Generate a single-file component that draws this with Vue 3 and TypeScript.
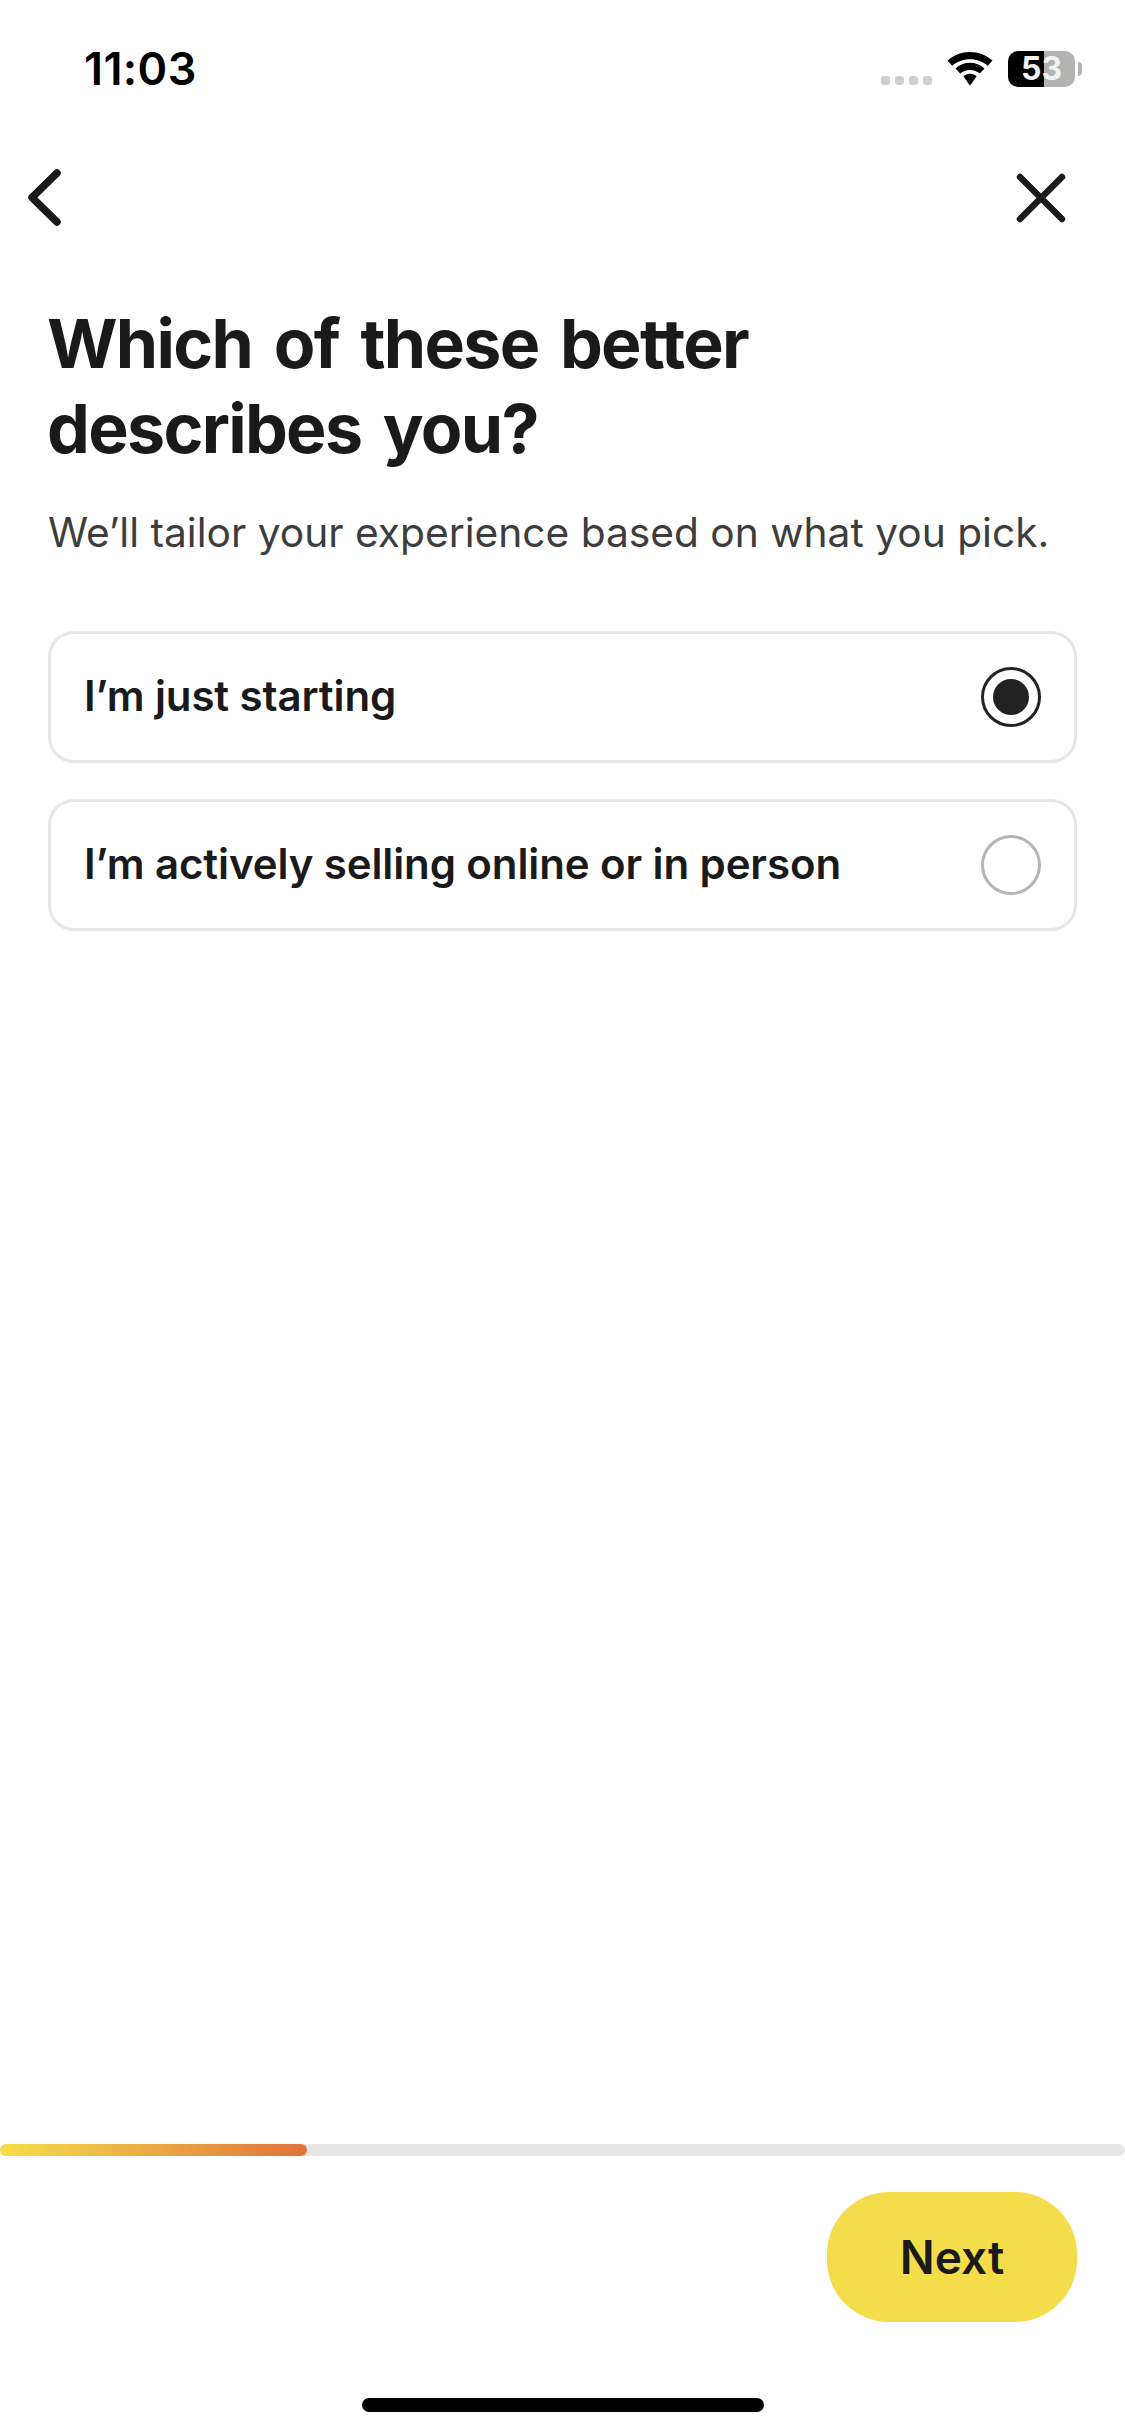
<script setup lang="ts">
interface Option { label: string; selected: boolean }
const options: Option[] = [
  { label: 'I’m just starting', selected: true },
  { label: 'I’m actively selling online or in person', selected: false },
]
const progress = 27.3
</script>

<template>
  <div class="page">
    <header class="status">
      <span class="time">11:03</span>
      <div class="indicators">
        <div class="signal"><i></i><i></i><i></i><i></i></div>
        <svg class="wifi" width="46" height="34" viewBox="0 0 46 34">
          <path d="M23 0C14.500 0 6.500 3.200 .5 8.600L5.200 13.800C10 9.600 16.200 7.200 23 7.200S36 9.600 40.800 13.800L45.500 8.600C39.500 3.200 31.500 0 23 0Z" />
          <path d="M23 10.800C17.700 10.800 12.500 12.800 8.500 16.400L13.200 21.600C15.900 19.300 19.300 18 23 18S30.100 19.300 32.800 21.600L37.500 16.400C33.500 12.800 28.300 10.800 23 10.800Z" />
          <path d="M23 21.800C20.500 21.800 18.200 22.700 16.400 24.200L23 33.800L29.600 24.200C27.800 22.700 25.500 21.800 23 21.800Z" />
        </svg>
        <div class="battery"><span class="level">53</span></div>
        <div class="nub"></div>
      </div>
    </header>

    <nav class="nav">
      <svg class="back" width="36" height="62" viewBox="0 0 36 62" fill="none">
        <path d="M31 5L6 29.500L31 54" />
      </svg>
      <svg class="close" width="52" height="52" viewBox="0 0 52 52" fill="none">
        <path d="M5 5L47 47M47 5L5 47" />
      </svg>
    </nav>

    <main class="content">
      <h1 class="title">Which of these better describes you?</h1>
      <p class="subtitle">We’ll tailor your experience based on what you pick.</p>
      <div class="options">
        <div v-for="o in options" :key="o.label" class="option">
          <span class="label">{{ o.label }}</span>
          <span class="radio" :class="{ on: o.selected }"></span>
        </div>
      </div>
    </main>

    <div class="track"><div class="fill" :style="{ width: progress + '%' }"></div></div>

    <footer class="footer">
      <button class="next" type="button">Next</button>
    </footer>

    <div class="home-row"><div class="home"></div></div>
  </div>
</template>

<style>
html, body { margin: 0; background: #fff; }
</style>

<style scoped>
.page {
  width: 1125px;
  height: 2436px;
  display: flex;
  flex-direction: column;
  background: #fff;
  color: #1a1a1a;
  font-family: Inter, "Noto Sans", sans-serif;
  overflow: hidden;
}
.status {
  height: 138px;
  box-sizing: border-box;
  padding: 45px 43px 0 84px;
  display: flex;
  justify-content: space-between;
  align-items: flex-start;
}
.time {
  font-size: 45px;
  line-height: 48px;
  font-weight: 600;
  color: #000;
  letter-spacing: 0.4px;
}
.indicators {
  display: flex;
  align-items: flex-start;
  padding-top: 6px;
}
.signal {
  display: flex;
  gap: 5px;
  margin-top: 25px;
  margin-right: 15px;
}
.signal i {
  width: 9px;
  height: 9px;
  border-radius: 3px;
  background: #cfcfcf;
}
.wifi { margin-right: 15px; margin-top: 1px; }
.wifi path { fill: #000; }
.battery {
  width: 67px;
  height: 36px;
  border-radius: 10px;
  background: linear-gradient(90deg, #000 0 53%, #b3b3b3 53% 100%);
  display: flex;
  align-items: center;
  justify-content: center;
}
.level {
  font-size: 32px;
  line-height: 36px;
  font-weight: 700;
  color: #f2f2f2;
}
.nub {
  width: 4px;
  height: 14px;
  margin: 11px 0 0 3px;
  border-radius: 0 7px 7px 0;
  background: #b3b3b3;
}
.nav {
  height: 84px;
  box-sizing: border-box;
  padding: 30px 58px 0 26px;
  display: flex;
  justify-content: space-between;
  align-items: flex-start;
}
.back path, .close path {
  stroke: #1a1a1a;
  stroke-linecap: round;
  stroke-linejoin: round;
}
.back path { stroke-width: 7.500; }
.close path { stroke-width: 6.500; }
.close { margin-top: 4px; }
.content {
  flex: 1;
  padding: 79px 48px 0;
}
.title {
  margin: 0 0 0 -1px;
  width: 800px;
  font-size: 68px;
  line-height: 85px;
  font-weight: 700;
  letter-spacing: -1.69px;
  word-spacing: 7px;
  color: #1a1a1a;
}
.subtitle {
  margin: 36px 0 0;
  font-size: 40.700px;
  line-height: 52px;
  font-weight: 400;
  color: #3d3d3d;
  white-space: nowrap;
}
.options {
  margin-top: 72px;
  display: flex;
  flex-direction: column;
  gap: 36px;
}
.option {
  height: 132px;
  box-sizing: border-box;
  border: 3px solid #e6e6e6;
  border-radius: 26px;
  padding: 0 33px 0 33px;
  display: flex;
  align-items: center;
  justify-content: space-between;
}
.label {
  font-size: 42px;
  font-weight: 600;
  letter-spacing: -0.1px;
  padding-bottom: 3px;
  color: #1a1a1a;
}
.radio {
  width: 60px;
  height: 60px;
  box-sizing: border-box;
  border: 3px solid #b5b5b5;
  border-radius: 50%;
  display: flex;
  align-items: center;
  justify-content: center;
}
.radio.on { border-color: #222; }
.radio.on::after {
  content: "";
  width: 36px;
  height: 36px;
  border-radius: 50%;
  background: #222;
}
.track {
  height: 12px;
  background: #e6e6e6;
  border-radius: 6px;
}
.fill {
  height: 100%;
  border-radius: 6px;
  background: linear-gradient(90deg, #f5df4a, #e0733a);
}
.footer {
  padding: 36px 48px 0;
  display: flex;
  justify-content: flex-end;
}
.next {
  width: 250px;
  height: 130px;
  border: 0;
  border-radius: 62px;
  background: #f4dd4b;
  color: #1a1a1a;
  font-family: inherit;
  font-size: 46px;
  font-weight: 600;
  padding: 0;
}
.home-row {
  height: 114px;
  box-sizing: border-box;
  padding-top: 76px;
  display: flex;
  justify-content: center;
}
.home {
  width: 402px;
  height: 14px;
  border-radius: 7px;
  background: #000;
}
</style>
